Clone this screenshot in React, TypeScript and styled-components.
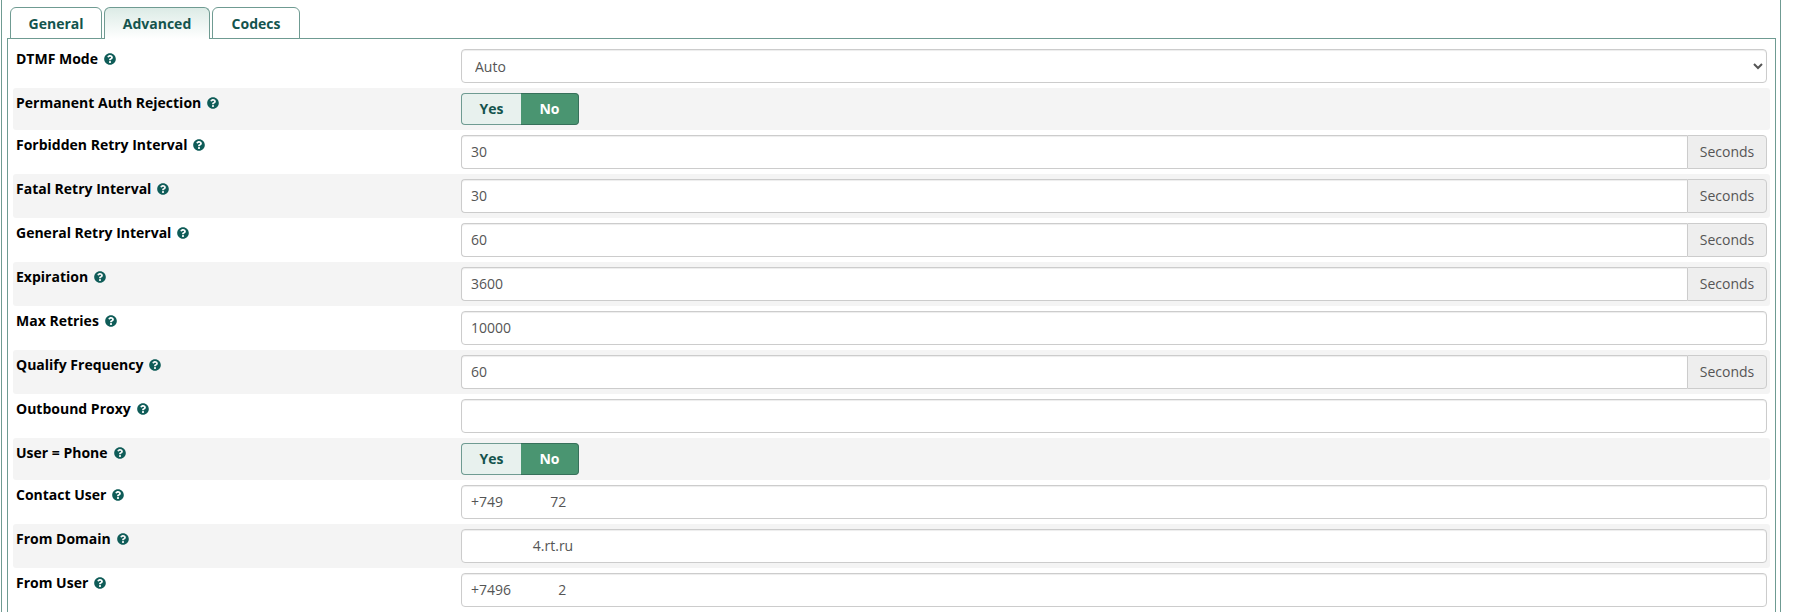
import React from "react";
import styled, { createGlobalStyle } from "styled-components";
import { FaQuestionCircle } from "react-icons/fa";

const GlobalStyle = createGlobalStyle`
  html, body {
    margin: 0;
    height: 612px;
    overflow: hidden;
    background: #fff;
    font-family: "Open Sans", "Liberation Sans", sans-serif;
    font-size: 14px;
    color: #000;
  }
`;

const Page = styled.div`
  box-sizing: border-box;
  width: 1780px;
  height: 612px;
  margin-left: 1px;
  padding: 7px 0 0 5px;
  border-left: 1px solid #6f9b92;
  border-right: 1px solid #6f9b92;
  overflow: hidden;
`;

const TabBar = styled.div`
  display: flex;
  gap: 2px;
  height: 32px;
  padding-left: 3px;
  margin-bottom: -1px;
  position: relative;
  z-index: 1;
`;

const Tab = styled.div<{ $active?: boolean; $width: number }>`
  box-sizing: border-box;
  width: ${(p) => p.$width}px;
  height: 32px;
  display: flex;
  align-items: center;
  justify-content: center;
  border: 1px solid #6f9b92;
  border-bottom: ${(p) => (p.$active ? "none" : "1px solid #6f9b92")};
  border-radius: 6px 6px 0 0;
  font-weight: 700;
  font-size: 14px;
  color: #14544e;
  background: ${(p) =>
    p.$active ? "linear-gradient(to bottom, #dcebe6 0%, #ffffff 100%)" : "#fff"};
`;

const Panel = styled.div`
  border: 1px solid #6f9b92;
  padding: 5px 5px 0;
  width: 1769px;
  box-sizing: border-box;
`;

const Row = styled.div<{ $shaded?: boolean; $toggle?: boolean }>`
  display: grid;
  grid-template-columns: 445px 1fr;
  box-sizing: border-box;
  height: ${(p) => (p.$toggle ? 42 : 44)}px;
  padding: 5px 3px 5px 3px;
  border-radius: 3px;
  background: ${(p) => (p.$shaded ? "#f4f4f4" : "transparent")};
`;

const Label = styled.label`
  display: flex;
  align-items: center;
  align-self: start;
  gap: 6px;
  height: 20px;
  font-weight: 700;
  line-height: 20px;
`;

const Help = styled(FaQuestionCircle)`
  width: 12px;
  height: 12px;
  color: #0f5c58;
`;

const InputGroup = styled.div`
  display: flex;
  height: 34px;
`;

const TextInput = styled.input<{ $grouped?: boolean }>`
  flex: 1;
  min-width: 0;
  box-sizing: border-box;
  height: 34px;
  padding: 5px 10px 7px 9px;
  border: 1px solid #ccc;
  border-radius: ${(p) => (p.$grouped ? "4px 0 0 4px" : "4px")};
  border-right: ${(p) => (p.$grouped ? "none" : "1px solid #ccc")};
  box-shadow: inset 0 1px 1px rgba(0, 0, 0, 0.075);
  background: #fff;
  color: #555;
  font: 400 14px "Open Sans", "Liberation Sans", sans-serif;
  white-space: pre;
  outline: none;
`;

const Addon = styled.span`
  box-sizing: border-box;
  width: 80px;
  padding-bottom: 2px;
  display: flex;
  align-items: center;
  justify-content: center;
  background: #eee;
  border: 1px solid #ccc;
  border-radius: 0 4px 4px 0;
  color: #555;
`;

const Select = styled.select`
  box-sizing: border-box;
  width: 100%;
  height: 34px;
  padding: 6px 9px;
  border: 1px solid #ccc;
  border-radius: 4px;
  box-shadow: inset 0 1px 1px rgba(0, 0, 0, 0.075);
  background: #fff;
  color: #555;
  font: 400 14px "Open Sans", "Liberation Sans", sans-serif;
  outline: none;
`;

const Toggle = styled.div`
  display: flex;
  width: 118px;
  height: 32px;
`;

const ToggleButton = styled.button<{ $on?: boolean }>`
  box-sizing: border-box;
  padding: 0 0 2px;
  height: 32px;
  width: ${(p) => (p.$on ? 58 : 60)}px;
  border: 1px solid ${(p) => (p.$on ? "#37705a" : "#6f9b92")};
  border-left: ${(p) => (p.$on ? "none" : "1px solid #6f9b92")};
  border-right: ${(p) => (p.$on ? "1px solid #37705a" : "none")};
  border-radius: ${(p) => (p.$on ? "0 4px 4px 0" : "4px 0 0 4px")};
  background: ${(p) => (p.$on ? "#4a9571" : "#e8f1ee")};
  color: ${(p) => (p.$on ? "#fff" : "#14544e")};
  font: 700 14px "Open Sans", "Liberation Sans", sans-serif;
`;

type Field = {
  label: string;
  kind: "select" | "toggle" | "text";
  value?: string;
  unit?: string;
};

const fields: Field[] = [
  { label: "DTMF Mode", kind: "select", value: "Auto" },
  { label: "Permanent Auth Rejection", kind: "toggle" },
  { label: "Forbidden Retry Interval", kind: "text", value: "30", unit: "Seconds" },
  { label: "Fatal Retry Interval", kind: "text", value: "30", unit: "Seconds" },
  { label: "General Retry Interval", kind: "text", value: "60", unit: "Seconds" },
  { label: "Expiration", kind: "text", value: "3600", unit: "Seconds" },
  { label: "Max Retries", kind: "text", value: "10000" },
  { label: "Qualify Frequency", kind: "text", value: "60", unit: "Seconds" },
  { label: "Outbound Proxy", kind: "text", value: "" },
  { label: "User = Phone", kind: "toggle" },
  { label: "Contact User", kind: "text", value: "+749             72" },
  { label: "From Domain", kind: "text", value: "                 4.rt.ru" },
  { label: "From User", kind: "text", value: "+7496             2" },
];

const Control = ({ field }: { field: Field }) => {
  if (field.kind === "select") {
    return (
      <Select defaultValue={field.value}>
        <option>{field.value}</option>
      </Select>
    );
  }
  if (field.kind === "toggle") {
    return (
      <Toggle>
        <ToggleButton>Yes</ToggleButton>
        <ToggleButton $on>No</ToggleButton>
      </Toggle>
    );
  }
  return (
    <InputGroup>
      <TextInput $grouped={!!field.unit} defaultValue={field.value} />
      {field.unit && <Addon>{field.unit}</Addon>}
    </InputGroup>
  );
};

export default function App() {
  return (
    <Page>
      <GlobalStyle />
      <TabBar>
        <Tab $width={92}>General</Tab>
        <Tab $width={106} $active>
          Advanced
        </Tab>
        <Tab $width={88}>Codecs</Tab>
      </TabBar>
      <Panel>
        {fields.map((field, i) => (
          <Row key={field.label} $shaded={i % 2 === 1} $toggle={field.kind === "toggle"}>
            <Label>
              {field.label}
              <Help />
            </Label>
            <Control field={field} />
          </Row>
        ))}
      </Panel>
    </Page>
  );
}
